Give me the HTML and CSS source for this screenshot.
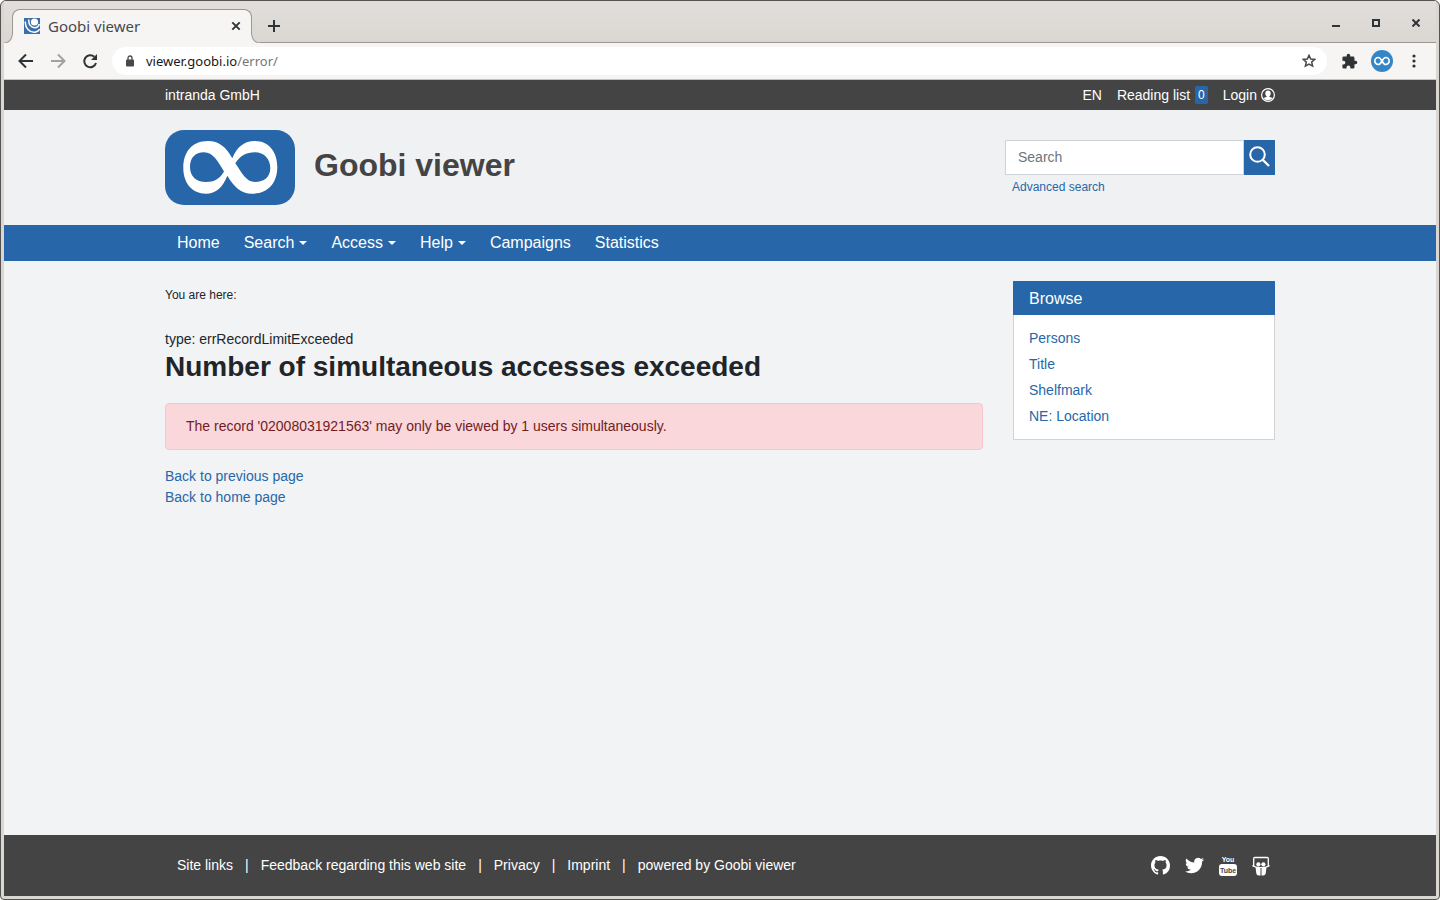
FILE: index.html
```html
<!DOCTYPE html>
<html lang="en">
<head>
<meta charset="utf-8">
<title>Goobi viewer</title>
<link rel="stylesheet" href="styles.css">
</head>
<body>
<div class="window">
  <div class="titlebar">
    <div class="tab">
      <svg class="favicon" viewBox="0 0 16 16"><rect width="16" height="16" fill="#3c6fa8"/><circle cx="10.500" cy="4" r="3.600" fill="#fff"/><path d="M5 1.500C4 6 7 10 11.500 9.700 14 9.300 15 7.500 15.400 6M1.300 3.500C1 10 5.500 14.700 11 14.200 13.500 13.800 15 12.500 15.700 11" fill="none" stroke="#fff" stroke-width="1.500"/></svg>
      <span class="tab-title">Goobi viewer</span>
      <button class="plain" aria-label="Close tab"><svg width="10" height="10" viewBox="0 0 10 10"><path d="M1.300 1.300l7.400 7.400M8.700 1.300L1.300 8.700" stroke="#2e3436" stroke-width="1.900"/></svg></button>
    </div>
    <button class="plain new-tab" aria-label="New tab"><svg width="12" height="12" viewBox="0 0 12 12"><path d="M6 0v12M0 6h12" stroke="#2e3436" stroke-width="2"/></svg></button>
    <div class="window-controls">
      <button class="plain" aria-label="Minimize"><svg width="8" height="8" viewBox="0 0 8 8"><path d="M0 7h8" stroke="#2e3436" stroke-width="2"/></svg></button>
      <button class="plain" aria-label="Maximize"><svg width="8" height="8" viewBox="0 0 8 8"><path d="M1 1h6v6H1z" fill="none" stroke="#2e3436" stroke-width="2"/></svg></button>
      <button class="plain" aria-label="Close window"><svg width="8" height="8" viewBox="0 0 8 8"><path d="M.5.5l7 7M7.500.5l-7 7" stroke="#2e3436" stroke-width="2"/></svg></button>
    </div>
  </div>
  <div class="toolbar">
    <button class="plain" aria-label="Back"><svg width="16" height="16" viewBox="0 0 16 16"><path d="M15 8H2M8 1.500L1.500 8 8 14.500" fill="none" stroke="#2e3436" stroke-width="2"/></svg></button>
    <button class="plain" aria-label="Forward"><svg width="16" height="16" viewBox="0 0 16 16"><path d="M1 8h13M8 1.500L14.500 8 8 14.500" fill="none" stroke="#a0a2a2" stroke-width="2"/></svg></button>
    <button class="plain" aria-label="Reload"><svg width="16" height="16" viewBox="0 0 16 16"><path d="M14 10A6 6 0 1 1 12.300 3.800" fill="none" stroke="#2e3436" stroke-width="2"/><path d="M15 1v6H9z" fill="#2e3436"/></svg></button>
    <div class="address">
      <svg width="8" height="12" viewBox="0 0 8 12"><path d="M2 5V3a2 2 0 0 1 4 0v2" fill="none" stroke="#46484b" stroke-width="1.300"/><rect y="4.500" width="8" height="7" rx="1" fill="#46484b"/></svg>
      <span class="url">viewer.goobi.io<span class="path">/error/</span></span>
      <button class="plain" aria-label="Bookmark"><svg width="14" height="14" viewBox="0 0 14 14"><path d="M7 1.300L8.700 5l4 .4-3 2.700.9 4L7 10l-3.600 2.100.9-4-3-2.700 4-.4z" fill="none" stroke="#46484b" stroke-width="1.500"/></svg></button>
    </div>
    <div class="tools">
      <button class="plain" aria-label="Extensions"><svg width="17" height="17" viewBox="0 0 24 24"><path fill="#2e3436" d="M20.500 11H19V7a2 2 0 0 0-2-2h-4V3.500a2.500 2.500 0 0 0-5 0V5H4a2 2 0 0 0-2 2v3.800h1.500a2.700 2.700 0 0 1 0 5.400H2V20a2 2 0 0 0 2 2h3.800v-1.500a2.700 2.700 0 0 1 5.400 0V22H17a2 2 0 0 0 2-2v-4h1.500a2.500 2.500 0 0 0 0-5z"/></svg></button>
      <button class="plain" aria-label="Profile"><svg width="22" height="22" viewBox="0 0 22 22"><circle cx="11" cy="11" r="11" fill="#3586c6"/><path d="M11 11C9.500 8.300 8.700 7.500 7.300 7.500a3.400 3.400 0 0 0 0 7c1.400 0 2.200-.8 3.700-3.500s2.300-3.500 3.700-3.500a3.400 3.400 0 0 1 0 7c-1.400 0-2.200-.8-3.700-3.500z" fill="none" stroke="#fff" stroke-width="1.700"/></svg></button>
      <button class="plain" aria-label="Menu"><svg width="4" height="14" viewBox="0 0 4 14" fill="#2e3436"><circle cx="2" cy="2" r="1.600"/><circle cx="2" cy="7" r="1.600"/><circle cx="2" cy="12" r="1.600"/></svg></button>
    </div>
  </div>

  <div class="page">
    <div class="topbar">
      <div class="container topbar-row">
        <a href="#">intranda GmbH</a>
        <div class="user-links">
          <a href="#">EN</a>
          <a href="#" class="icon-link reading-list">Reading list <span class="badge">0</span></a>
          <a href="#" class="icon-link">Login <svg width="14" height="14" viewBox="0 0 14 14"><circle cx="7" cy="7" r="6.400" fill="none" stroke="#fff" stroke-width="1.200"/><ellipse cx="7" cy="5.500" rx="2.700" ry="3" fill="#fff"/><path d="M5.700 7.500h2.600v1.300l3.200 1.100a5.500 5.500 0 0 1-9 0l3.200-1.100z" fill="#fff"/></svg></a>
        </div>
      </div>
    </div>
    <header class="masthead">
      <div class="container masthead-row">
        <a href="#" class="brand">
          <svg width="130" height="75" viewBox="0 0 130 75"><rect width="130" height="75" rx="19" fill="#2767a9"/><path fill="#fff" fill-rule="evenodd" d="M67.300 28.300C72 17 79 11 90 11c14 0 22.300 11 22.300 26 0 16-9.300 26.700-25.300 26.700-11 0-18-7-24.700-18C58 57 51 63.700 41 63.700c-14 0-22.700-10.700-22.700-25.700 0-16 8.700-27 24.700-27 11 0 18 6 24.300 17.300zM59 41.500c-6-10-11-19.200-20-19.200S25 28 25 37s6 15 16 15c8 0 14-3 18-10.500zM70.300 33.300C77 43 81 52 90 52s15.300-5 15.300-14S99 22.300 90 22.300 75 26 70.300 33.300z"/></svg>
          <span>Goobi viewer</span>
        </a>
        <form class="search">
          <div class="search-row">
            <input type="text" placeholder="Search" aria-label="Search">
            <button type="button" aria-label="Start search"><svg width="21" height="21" viewBox="0 0 21 21"><path d="M13.700 13.700L20 20" stroke="#fff" stroke-width="2.300"/><circle cx="8.500" cy="8.500" r="7.300" fill="none" stroke="#fff" stroke-width="2"/></svg></button>
          </div>
          <a href="#">Advanced search</a>
        </form>
      </div>
    </header>
    <nav class="mainnav">
      <div class="container nav-row">
        <a href="#">Home</a>
        <a href="#" class="has-menu">Search</a>
        <a href="#" class="has-menu">Access</a>
        <a href="#" class="has-menu">Help</a>
        <a href="#">Campaigns</a>
        <a href="#">Statistics</a>
      </div>
    </nav>
    <div class="container content">
      <main>
        <div class="breadcrumb">You are here:</div>
        <div>type: errRecordLimitExceeded</div>
        <h1>Number of simultaneous accesses exceeded</h1>
        <div class="alert" role="alert">The record '02008031921563' may only be viewed by 1 users simultaneously.</div>
        <div class="back-links">
          <a href="#">Back to previous page</a>
          <a href="#">Back to home page</a>
        </div>
      </main>
      <aside class="browse">
        <h2>Browse</h2>
        <ul>
          <li><a href="#">Persons</a></li>
          <li><a href="#">Title</a></li>
          <li><a href="#">Shelfmark</a></li>
          <li><a href="#">NE: Location</a></li>
        </ul>
      </aside>
    </div>
    <footer class="footer">
      <div class="container footer-row">
        <div class="footer-links">
          <a href="#">Site links</a><span>|</span><a href="#">Feedback regarding this web site</a><span>|</span><a href="#">Privacy</a><span>|</span><a href="#">Imprint</a><span>|</span><a href="#">powered by Goobi viewer</a>
        </div>
        <div class="social">
          <a href="#" aria-label="GitHub"><svg width="19" height="19" viewBox="0 0 16 16" fill="#fff"><path d="M8 0C3.580 0 0 3.580 0 8c0 3.540 2.290 6.530 5.470 7.590.4.070.55-.17.55-.38 0-.19-.01-.82-.01-1.490-2.010.37-2.530-.49-2.690-.94-.09-.23-.48-.94-.82-1.130-.28-.15-.68-.52-.01-.53.63-.01 1.080.58 1.230.82.72 1.210 1.870.87 2.330.66.070-.52.28-.87.51-1.070-1.780-.2-3.640-.89-3.640-3.950 0-.87.31-1.590.82-2.150-.08-.2-.36-1.020.080-2.120 0 0 .67-.21 2.200.82.640-.18 1.320-.27 2-.27.680 0 1.360.090 2 .27 1.530-1.040 2.200-.82 2.200-.82.440 1.100.160 1.920.080 2.120.51.560.820 1.270.820 2.150 0 3.070-1.870 3.750-3.650 3.950.290.250.540.730.540 1.480 0 1.070-.01 1.930-.01 2.200 0 .210.150.460.550.380A8.013 8.013 0 0 0 16 8c0-4.420-3.580-8-8-8z"/></svg></a>
          <a href="#" aria-label="Twitter"><svg width="19" height="19" viewBox="0 0 24 24" fill="#fff"><path d="M23.953 4.570a10 10 0 0 1-2.825.775 4.958 4.958 0 0 0 2.163-2.723c-.951.555-2.005.959-3.127 1.184a4.920 4.920 0 0 0-8.384 4.482C7.690 8.095 4.067 6.130 1.640 3.162a4.822 4.822 0 0 0-.666 2.475c0 1.710.870 3.213 2.188 4.096a4.904 4.904 0 0 1-2.228-.616v.06a4.923 4.923 0 0 0 3.946 4.827 4.996 4.996 0 0 1-2.212.085 4.936 4.936 0 0 0 4.604 3.417 9.867 9.867 0 0 1-6.102 2.105c-.39 0-.779-.023-1.170-.067a13.995 13.995 0 0 0 7.557 2.209c9.053 0 13.998-7.496 13.998-13.985 0-.21 0-.42-.015-.63A9.935 9.935 0 0 0 24 4.590z"/></svg></a>
          <a href="#" aria-label="YouTube"><svg class="youtube" width="18" height="23" viewBox="0 0 18 23"><text x="9" y="8" fill="#fff">You</text><rect y="10" width="18" height="12" rx="3" fill="#fff"/><text x="9" y="19" fill="#444">Tube</text></svg></a>
          <a href="#" aria-label="SlideShare"><svg width="18" height="20" viewBox="0 0 18 20"><path d="M1.700 10V2.500q0-1 1-1h12.600q1 0 1 1V10" fill="none" stroke="#fff" stroke-width="1.300"/><path d="M.4 9.500Q3 11.500 9 11.500t8.600-2" fill="none" stroke="#fff" stroke-width="1.200"/><circle cx="6.400" cy="8.300" r="2.100" fill="#fff"/><circle cx="11.400" cy="8.300" r="2.100" fill="#fff"/><path d="M3.500 11h5v8.500H7Q4 19.500 4 15zM9.500 11h5l-.5 4q0 4.500-3 4.500H9.500z" fill="#fff"/></svg></a>
        </div>
      </div>
    </footer>
  </div>
</div>
</body>
</html>
```
FILE: styles.css
```css
* { box-sizing: border-box; }

body {
  margin: 0;
  background: #fff;
  color: #212529;
  font: 14px/21px "Liberation Sans", Arial, sans-serif;
}

a { color: #2767a9; text-decoration: none; }

.window {
  display: flex;
  flex-direction: column;
  min-height: 100vh;
  padding: 0 3px 3px;
  border: 1px solid #555352;
  border-radius: 6px 6px 4px 4px;
  background: #dad6d1;
}

.plain {
  display: flex;
  align-items: center;
  justify-content: center;
  padding: 0;
  border: 0;
  background: none;
}

/* Browser frame */
.titlebar {
  display: flex;
  align-items: center;
  height: 42px;
  padding: 0 16px 0 8px;
  border-bottom: 1px solid #9b9792;
  background: linear-gradient(#e2dedb, #dad6d2);
}

.tab {
  position: relative;
  display: flex;
  align-items: center;
  gap: 8px;
  align-self: flex-end;
  width: 240px;
  height: 34px;
  margin-bottom: -1px;
  padding: 0 10px 2px 11px;
  border: 1px solid #9b9792;
  border-bottom: 0;
  border-radius: 8px 8px 0 0;
  background: #f6f5f3;
}

/* Concave feet joining the tab to the toolbar */
.tab::before,
.tab::after {
  content: "";
  position: absolute;
  bottom: 0;
  width: 9px;
  height: 8px;
}

.tab::before {
  right: 100%;
  background: radial-gradient(circle at 0 0, #dbd7d3 7px, #9b9792 8px, #f6f5f3 9px);
}

.tab::after {
  left: 100%;
  background: radial-gradient(circle at 100% 0, #dbd7d3 7px, #9b9792 8px, #f6f5f3 9px);
}

.favicon { width: 16px; height: 16px; }

.tab-title {
  flex: 1;
  color: #46484b;
  font: 15px/20px "Noto Sans", sans-serif;
}

.new-tab { margin: 8px 0 0 16px; }

.window-controls { display: flex; gap: 32px; margin: 2px 0 0 auto; }

.toolbar {
  display: flex;
  align-items: center;
  gap: 16px;
  height: 37px;
  padding: 0 20px 0 14px;
  border-bottom: 1px solid #c5c3bf;
  background: #f6f5f3;
}

.tools { display: flex; align-items: center; gap: 13px; }
.tools .plain:last-child { margin-left: 6px; }

.address {
  display: flex;
  flex: 1;
  align-items: center;
  gap: 12px;
  height: 28px;
  margin: 0 -2px;
  padding: 0 11px 0 14px;
  border-radius: 14px;
  background: #fff;
}

.url { flex: 1; color: #16181a; font: 13px/20px "Noto Sans", sans-serif; }
.path { color: #747678; }

/* Site */
.page {
  display: flex;
  flex: 1;
  flex-direction: column;
  background: #f1f3f5;
}

.container {
  width: 100%;
  max-width: 1140px;
  margin: 0 auto;
  padding: 0 15px;
}

.topbar { background: #444; }

.topbar-row,
.masthead-row,
.footer-row {
  display: flex;
  align-items: center;
  justify-content: space-between;
}

.topbar-row { min-height: 30px; }
.topbar a { color: #fff; }
.user-links { display: flex; gap: 15px; }
.icon-link { display: flex; align-items: center; gap: 4px; }
.reading-list { gap: 5px; }

.badge {
  padding: 0 3px;
  border-radius: 2px;
  background: #2767a9;
  font-size: 12px;
  line-height: 18px;
}

.masthead { background: #f0f1f3; }
.masthead-row { min-height: 115px; }

.brand {
  display: flex;
  align-items: center;
  gap: 19px;
  color: #444;
  font-size: 32px;
  font-weight: bold;
  line-height: 70px;
}

.brand span { padding-bottom: 5px; }

.search { width: 270px; font-size: 12px; line-height: 18px; }
.search-row { display: flex; }
.search > a { display: block; margin: 3px 7px 0; }

.search input {
  flex: 1;
  min-width: 0;
  height: 35px;
  padding: 0 12px;
  border: 1px solid #ced4da;
  border-radius: 0;
  background: #fff;
  font: 14px "Liberation Sans", Arial, sans-serif;
}

.search input::placeholder { color: #6c757d; opacity: 1; }

.search button {
  display: flex;
  align-items: center;
  justify-content: center;
  width: 31px;
  padding: 0 1px 1px 0;
  border: 0;
  background: #2767a9;
}

.mainnav { background: #2767a9; }
.nav-row { display: flex; }

.nav-row a {
  display: flex;
  align-items: center;
  gap: 5px;
  padding: 0 12px;
  color: #fff;
  font-size: 16px;
  line-height: 36px;
}

.has-menu::after {
  content: "";
  border: 4px solid transparent;
  border-top-color: #fff;
  border-bottom: 0;
}

.content {
  display: flex;
  flex: 1;
  align-items: flex-start;
  gap: 30px;
}

main { flex: 1; padding: 25px 0; }
.breadcrumb { margin-bottom: 25px; font-size: 12px; line-height: 18px; }

h1 { margin: 0 0 19px; font-size: 28px; line-height: 34px; }

.alert {
  margin-bottom: 16px;
  padding: 12px 20px;
  border: 1px solid #f7c5cb;
  border-radius: 4px;
  background: #f9d7db;
  color: #721c24;
}

.back-links { display: flex; flex-direction: column; align-items: flex-start; }

.browse { width: 262px; margin-top: 20px; }

.browse h2 {
  margin: 0;
  padding: 2px 16px 0;
  background: #2767a9;
  color: #fff;
  font-size: 16px;
  font-weight: normal;
  line-height: 32px;
}

.browse ul {
  margin: 0;
  padding: 10px 15px;
  border: 1px solid #d0d2d3;
  border-top: 0;
  background: #fff;
  list-style: none;
}

.browse li { line-height: 26px; }

.footer { background: #444; color: #fff; }
.footer a { color: #fff; }
.footer-row { min-height: 61px; }
.footer-links { display: flex; gap: 12px; padding-left: 12px; }
.social { display: flex; align-items: center; gap: 15px; padding-right: 5px; }
.social a { display: flex; }

.youtube text {
  font: bold 7px "Liberation Sans Narrow", "Liberation Sans", sans-serif;
  text-anchor: middle;
}
```
